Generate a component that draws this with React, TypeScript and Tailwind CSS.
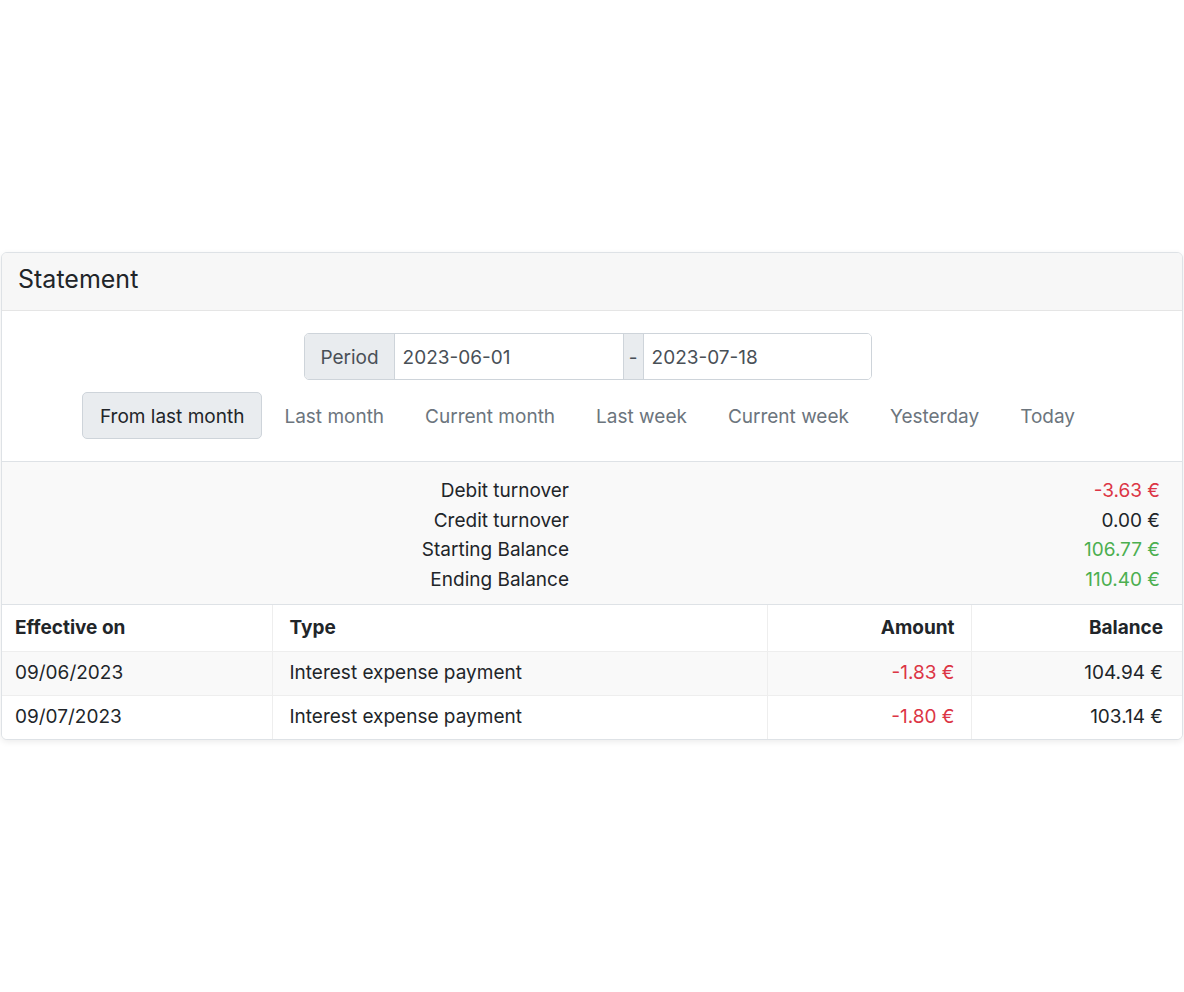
const presets = [
  { label: 'From last month', active: true },
  { label: 'Last month' },
  { label: 'Current month' },
  { label: 'Last week' },
  { label: 'Current week' },
  { label: 'Yesterday' },
  { label: 'Today' },
];

const summary = [
  { label: 'Debit turnover', value: '-3.63 €', tone: 'text-[#dc3545]' },
  { label: 'Credit turnover', value: '0.00 €', tone: 'text-[#212529]' },
  { label: 'Starting Balance', value: '106.77 €', tone: 'text-[#4caf50]' },
  { label: 'Ending Balance', value: '110.40 €', tone: 'text-[#4caf50]' },
];

const rows = [
  { date: '09/06/2023', type: 'Interest expense payment', amount: '-1.83 €', balance: '104.94 €' },
  { date: '09/07/2023', type: 'Interest expense payment', amount: '-1.80 €', balance: '103.14 €' },
];

export default function App() {
  return (
    <div
      className="min-h-screen bg-white flex items-center px-[1px] text-[19px] text-[#212529]"
      style={{ fontFamily: 'Inter, "Noto Sans", sans-serif' }}
    >
      <div className="w-full border border-[#dee2e6] rounded-[6px] shadow-[0_2px_6px_rgba(0,0,0,0.08)] overflow-hidden bg-white">
        {/* header */}
        <div className="bg-[#f7f7f7] border-b border-[#e5e5e5] pl-[16px] pt-[11px] pb-[16px]">
          <h4 className="text-[25px] leading-[30px] font-normal">Statement</h4>
        </div>

        {/* period picker */}
        <div className="flex flex-col items-center gap-[12px] pt-[22px] pb-[22px] pr-[8px]">
          <div className="flex h-[47px] border border-[#ced4da] rounded-[5px] overflow-hidden">
            <span className="flex items-center pt-[3px] bg-[#e9ecef] px-[15px] text-[#495057] border-r border-[#ced4da]">Period</span>
            <span className="flex items-center pt-[3px] w-[228px] px-[8px] text-[#495057] bg-white">2023-06-01</span>
            <span className="flex items-center justify-center pt-[3px] w-[21px] bg-[#e9ecef] text-[#495057] border-x border-[#ced4da]">-</span>
            <span className="flex items-center pt-[3px] w-[227px] px-[8px] text-[#495057] bg-white">2023-07-18</span>
          </div>
          <div className="flex gap-[3px]">
            {presets.map((p) =>
              p.active ? (
                <button
                  key={p.label}
                  className="h-[47px] pt-[4px] px-[17px] border border-[#ced4da] rounded-[5px] bg-[#e9ecef] text-[#212529]"
                >
                  {p.label}
                </button>
              ) : (
                <button key={p.label} className="h-[47px] pt-[4px] px-[18px] border border-transparent text-[#6c757d]">
                  {p.label}
                </button>
              )
            )}
          </div>
        </div>

        {/* summary */}
        <div className="bg-[#f9f9f9] border-y border-[#dee2e6] pt-[14px] pb-[10px]">
          {summary.map((s) => (
            <div key={s.label} className="grid grid-cols-2 leading-[29.5px]">
              <span className="text-right pr-[23px]">{s.label}</span>
              <span className={`text-right pr-[22px] ${s.tone}`}>{s.value}</span>
            </div>
          ))}
        </div>

        {/* table */}
        <table className="w-full table-fixed border-collapse">
          <colgroup>
            <col className="w-[270px]" />
            <col className="w-[495px]" />
            <col className="w-[204px]" />
            <col />
          </colgroup>
          <thead>
            <tr className="h-[46px] border-b border-[#eeeeee]">
              <th className="text-left font-bold pl-[13px] border-r border-[#eeeeee]">Effective on</th>
              <th className="text-left font-bold pl-[17px] border-r border-[#eeeeee]">Type</th>
              <th className="text-right font-bold pr-[16px] border-r border-[#eeeeee]">Amount</th>
              <th className="text-right font-bold pr-[19px]">Balance</th>
            </tr>
          </thead>
          <tbody>
            {rows.map((r, i) => (
              <tr
                key={r.date}
                className={`h-[44px] ${i === 0 ? 'bg-[#f9f9f9] border-b border-[#eeeeee]' : 'bg-white'}`}
              >
                <td className="pl-[13px] border-r border-[#eeeeee]">{r.date}</td>
                <td className="pl-[17px] border-r border-[#eeeeee]">{r.type}</td>
                <td className="text-right pr-[16px] text-[#dc3545] border-r border-[#eeeeee]">{r.amount}</td>
                <td className="text-right pr-[19px]">{r.balance}</td>
              </tr>
            ))}
          </tbody>
        </table>
      </div>
    </div>
  );
}
